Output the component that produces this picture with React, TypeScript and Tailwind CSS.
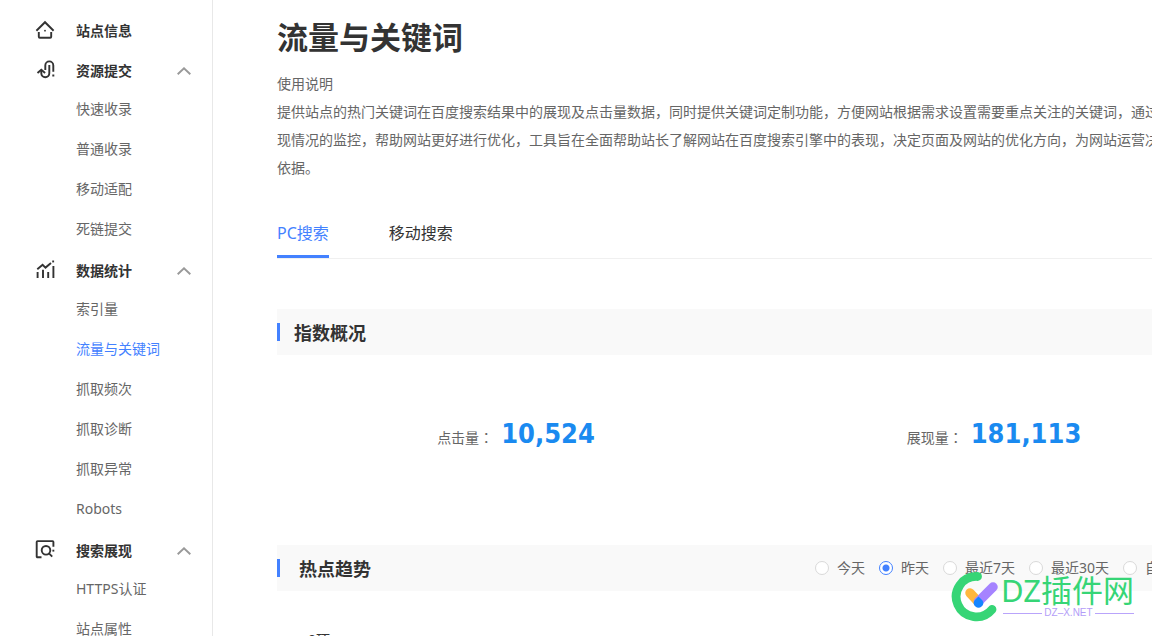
import { useState } from "react";

function HomeIcon() {
  return (
    <svg width="20" height="20" viewBox="0 0 20 20" fill="none" stroke="#333" strokeWidth="1.9" aria-hidden="true">
      <path d="M1.4 10.7 10 2.2l8.6 8.500" />
      <path d="M3.800 12v4.800a1 1 0 0 0 1 1h10.400a1 1 0 0 0 1-1V12" />
      <circle cx="10" cy="10.700" r="0.900" fill="#333" stroke="none" />
    </svg>
  );
}

function SubmitIcon() {
  return (
    <svg width="20" height="20" viewBox="0 0 20 20" fill="none" stroke="#333" strokeWidth="1.900" aria-hidden="true">
      <path d="M10.300 10V5.400a4 4 0 0 1 8 0v6.300" />
      <path d="M14.300 5v8.200a4 4 0 0 1-8 0V10" />
      <path d="m2.500 12.900 3.800-3.200 3.800 3.200" />
      <path d="M17.300 14.500h2v2h-2z" fill="#333" stroke="none" />
    </svg>
  );
}

function StatsIcon() {
  return (
    <svg width="20" height="20" viewBox="0 0 20 20" fill="none" stroke="#333" strokeWidth="1.900" aria-hidden="true">
      <path d="m2.300 9.300 5.300-4.500 2.900 2.800L16 3" />
      <path d="M2.600 12v6M8 9.800V18M13.200 12v6M18.400 6v12" />
      <path d="M17.200.500h1.900v1.900h-1.900z" fill="#333" stroke="none" />
    </svg>
  );
}

function SearchIcon() {
  return (
    <svg width="20" height="20" viewBox="0 0 20 20" fill="none" stroke="#333" strokeWidth="1.900" aria-hidden="true">
      <path d="M6.500 17.300h-4a.800.800 0 0 1-.800-.800V1.900a.800.800 0 0 1 .800-.800h15.100a.800.800 0 0 1 .800.800v4.900" />
      <circle cx="11" cy="10.300" r="4.300" />
      <path d="m14 13.400 3.200 3.200" />
      <path d="M17.400 9.700h1.900v1.900h-1.900z" fill="#333" stroke="none" />
    </svg>
  );
}

function Chevron() {
  return (
    <svg width="14" height="8" viewBox="0 0 14 8" fill="none" stroke="#999" strokeWidth="1.900" aria-hidden="true">
      <path d="m.700 7.300 6.300-6 6.300 6" />
    </svg>
  );
}

const groups = [
  { title: "站点信息", icon: <HomeIcon />, items: [] },
  { title: "资源提交", icon: <SubmitIcon />, items: ["快速收录", "普通收录", "移动适配", "死链提交"] },
  {
    title: "数据统计",
    icon: <StatsIcon />,
    items: ["索引量", "流量与关键词", "抓取频次", "抓取诊断", "抓取异常", "Robots"],
  },
  { title: "搜索展现", icon: <SearchIcon />, items: ["HTTPS认证", "站点属性"] },
];

function Sidebar() {
  return (
    <nav className="w-[213px] shrink-0 border-r border-[#e8e8e8] pt-[9px]">
      {groups.map((group) => (
        <div key={group.title} className="mt-1">
          <button type="button" className="flex h-9 w-full items-center pr-[21px] pl-[35px] text-sm font-bold text-[#333]">
            <span className="-mt-0.5 w-[41px]">{group.icon}</span>
            <span>{group.title}</span>
            {group.items.length > 0 && (
              <span className="ml-auto">
                <Chevron />
              </span>
            )}
          </button>
          <ul>
            {group.items.map((item) => (
              <li key={item}>
                <a
                  href="#"
                  className={
                    "flex h-10 items-center pl-[76px] text-sm " +
                    (item === "流量与关键词" ? "text-[#4381ff]" : "text-[#666]")
                  }
                >
                  {item}
                </a>
              </li>
            ))}
          </ul>
        </div>
      ))}
    </nav>
  );
}

function Stat({ label, value }: { label: string; value: string }) {
  return (
    <div className="flex items-baseline justify-center gap-2">
      <span className="text-sm text-[#666]">
        {label}
        <span lang="zh-TW" className="font-['Noto_Sans_CJK_TC',sans-serif]">
          ：
        </span>
      </span>
      <strong className="font-['DejaVu_Sans_Condensed','DejaVu_Sans',sans-serif] text-[27px] leading-9 text-[#1a8af0]">
        {value}
      </strong>
    </div>
  );
}

const ranges = ["今天", "昨天", "最近7天", "最近30天", "自定义"];

function RangePicker() {
  const [range, setRange] = useState("昨天");
  return (
    <div className="flex gap-3.5">
      {ranges.map((r) => (
        <label key={r} className="flex items-center gap-2 text-sm text-[#666]">
          <input
            type="radio"
            name="range"
            checked={range === r}
            onChange={() => setRange(r)}
            className="size-3.5 appearance-none rounded-full border border-[#d9d9d9] bg-white checked:border-[#4381ff] checked:bg-[radial-gradient(circle,#4381ff_3px,#fff_4px)]"
          />
          {r}
        </label>
      ))}
    </div>
  );
}

function Watermark() {
  return (
    <div className="absolute right-[18px] bottom-[13px] flex items-start gap-0.5">
      <svg width="50" height="52" viewBox="0 0 50 52" fill="none" strokeLinecap="round" aria-hidden="true">
        <path d="M28.500 5.500A20.200 20.200 0 1 0 43 38.500" stroke="#36d576" strokeWidth="8.800" />
        <path d="m21 22 8 8.500" stroke="#ffb73e" strokeWidth="9.500" />
        <path d="m29.500 30.500 14.500-14.500" stroke="#a583ff" strokeWidth="9.500" />
        <path d="m29.500 25.500 4 4a4.700 4.700 0 1 1-8 0z" fill="#1585ff" />
      </svg>
      <div className="pt-[3px]">
        <div className="text-[31px] leading-8 text-[#36d576]">DZ插件网</div>
        <div className="flex items-center gap-0.5 pl-0.5">
          <span className="h-px flex-1 bg-[#b9a4fb]" />
          <span className="font-['Liberation_Sans',sans-serif] text-[10px] leading-[14px] text-[#b39df8]">DZ–X.NET</span>
          <span className="h-px flex-1 bg-[#b9a4fb]" />
        </div>
      </div>
    </div>
  );
}

export default function App() {
  return (
    <div className="relative flex h-screen overflow-hidden bg-white font-['Noto_Sans','Noto_Sans_CJK_SC',sans-serif]">
      <Sidebar />
      <main className="min-w-0 flex-1 overflow-hidden pl-16">
        <div className="min-w-[956px]">
          <h1 className="pt-[15px] text-[31px] leading-[44px] font-bold text-[#333]">流量与关键词</h1>
          <div className="mt-[11px] text-sm leading-7 text-[#666]">
            <p>使用说明</p>
            <p>
              提供站点的热门关键词在百度搜索结果中的展现及点击量数据，同时提供关键词定制功能，方便网站根据需求设置需要重点关注的关键词，通过对关键词展现情况的监控，帮助网站更好进行优化，工具旨在全面帮助站长了解网站在百度搜索引擎中的表现，决定页面及网站的优化方向，为网站运营决策提供数据依据。
            </p>
          </div>
          <div role="tablist" className="mt-[27px] flex gap-[60px] border-b border-[#f0f0f0] text-base">
            <button type="button" role="tab" aria-selected="true" className="h-[49px] border-b-3 border-[#4381ff] pt-0.5 text-[#4381ff]">
              PC搜索
            </button>
            <button type="button" role="tab" aria-selected="false" className="h-[49px] border-b-3 border-transparent pt-0.5 text-[#333]">
              移动搜索
            </button>
          </div>

          <section className="mt-[50px]">
            <header className="flex h-[46px] items-center bg-[#f9f9f9]">
              <span className="h-[18px] w-[3px] bg-[#4381ff]" />
              <h2 className="ml-3.5 pt-0.5 text-lg font-bold text-[#333]">指数概况</h2>
            </header>
            <div className="grid h-[190px] grid-cols-2 pt-[61px]">
              <Stat label="点击量" value="10,524" />
              <Stat label="展现量" value="181,113" />
            </div>
          </section>

          <section>
            <header className="flex h-[46px] items-center bg-[#f9f9f9] pr-[46px]">
              <span className="h-[18px] w-[3px] bg-[#4381ff]" />
              <h2 className="mr-auto ml-[19px] pt-0.5 text-lg font-bold text-[#333]">热点趋势</h2>
              <RangePicker />
            </header>
            <p className="mt-[41px] ml-[31px] text-sm leading-4 text-[#333]">0项</p>
          </section>
        </div>
      </main>
      <Watermark />
    </div>
  );
}
